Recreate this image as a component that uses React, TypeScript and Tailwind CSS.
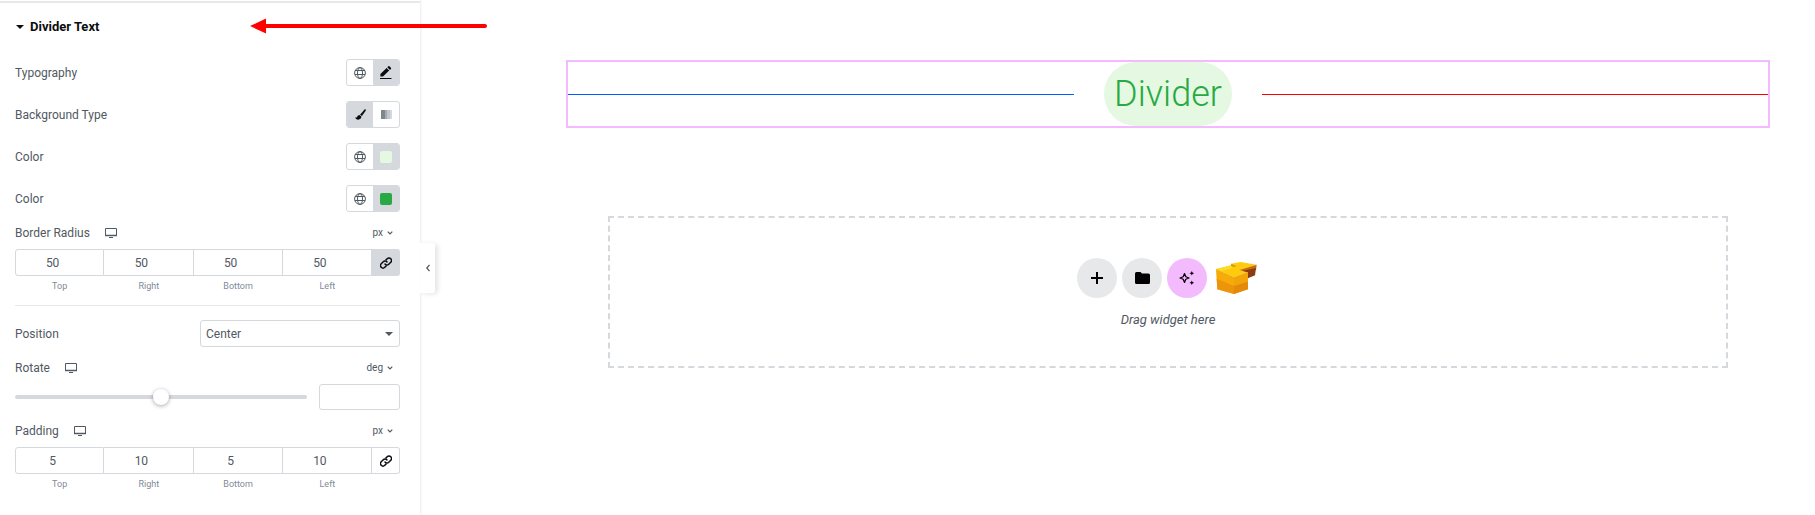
import { useState, type ReactNode } from "react"

const SIDES = ["Top", "Right", "Bottom", "Left"]

function GlobeIcon() {
  return (
    <svg viewBox="0 0 12 12" className="size-3" fill="none" stroke="currentColor">
      <circle cx="6" cy="6" r="5.4" />
      <ellipse cx="6" cy="6" rx="2.5" ry="5.4" />
      <path d="M1 3.500h10M1 7.500h10" />
    </svg>
  )
}

function PencilIcon() {
  return (
    <svg viewBox="0 0 12 14" className="h-3.5 w-3" fill="currentColor">
      <path d="M.4 10.500V8L6.600 1.900 9.200 4.500 3 10.500zM7.300 1.300l.9-.9c.4-.4 1-.4 1.400 0l1.300 1.300c.4.4.4 1 0 1.400l-.9.9zM0 12h11.500v1H0z" />
    </svg>
  )
}

function BrushIcon() {
  return (
    <svg viewBox="0 0 12 12" className="size-[11px]" fill="currentColor">
      <path d="M11.6.5c.4.400.300.900 0 1.300L7.600 7.700 5.500 6.200 10.200.7c.4-.4 1-.6 1.400-.2zM4.800 6.600l2.200 1.700c0 2.200-1.500 3.300-3.500 3.300C1.700 11.600.6 10.700.2 9.100c.6.4 1.300.4 1.800-.2.7-.9 1.500-2.300 2.800-2.300z" />
    </svg>
  )
}

function GradientIcon() {
  return (
    <svg viewBox="0 0 11 9" className="h-[9px] w-[11px]">
      <path fill="#7d868b" d="M0 0h4v9H0z" />
      <path fill="#a4a9b3" d="M4 0h2v9H4z" />
      <path fill="#c0c3d2" d="M6 0h3v9H6z" />
      <path fill="#d5d8dc" d="M9 0h2v9H9z" />
    </svg>
  )
}

function DesktopIcon() {
  return (
    <svg viewBox="0 0 12 10" className="h-2.5 w-3" fill="none" stroke="currentColor">
      <path d="M.5.5h11v7H.5z" />
      <path d="M0 7.500h12" strokeWidth="1.500" />
      <path d="M4 9.500h4" />
    </svg>
  )
}

function ChevronIcon() {
  return (
    <svg viewBox="0 0 6 4" className="h-1 w-1.5" fill="none" stroke="currentColor" strokeWidth="1.200">
      <path d="M.7.7 3 3 5.300.7" />
    </svg>
  )
}

function LinkIcon() {
  return (
    <svg viewBox="0 0 24 24" className="size-3" fill="none" stroke="currentColor" strokeWidth="3" strokeLinecap="round">
      <path d="M10 14a5 5 0 0 0 7.500.5l4-4a5 5 0 0 0-7.100-7.100L12 5.700" />
      <path d="M14 10a5 5 0 0 0-7.500-.5l-4 4a5 5 0 0 0 7.100 7.100L12 18.300" />
    </svg>
  )
}

function BlocksIcon() {
  return (
    <svg viewBox="0 0 123 96" className="h-8 w-[41px]">
      <path fill="#ffcb0d" d="M0 21 46 10l-1-5L74 0l48 8-50 16 24 6-42 15z" />
      <path fill="#fbdc2a" d="M0 21 46 10l16 4-46 13z" />
      <path fill="#e09a0a" d="m46 5 16 8-10 3-8-5z" />
      <path fill="#c96a10" d="m70 24 52-16-2 16-24 8z" />
      <path fill="#8a3d10" d="m80 26 40-8-3 22-21 9V31z" />
      <path fill="#f7ab08" d="m0 21 54 24v51L4 82z" />
      <path fill="#ec950a" d="m2 50 52 22v24L4 82z" />
      <path fill="#f2a50a" d="m54 45 42-15v52L54 96z" />
      <path fill="#e38a0c" d="m54 72 42-13v23L54 96z" />
    </svg>
  )
}

function Toggle({ active, label, children }: { active?: boolean; label: string; children: ReactNode }) {
  return (
    <button
      type="button"
      aria-label={label}
      aria-pressed={!!active}
      className={`flex flex-1 items-center justify-center ${active ? "bg-[#d5d8dc] text-[#0c0d0e]" : ""}`}
    >
      {children}
    </button>
  )
}

function ControlRow({ label, children }: { label: string; children: ReactNode }) {
  return (
    <div className="flex h-[27px] items-center justify-between">
      <span>{label}</span>
      <div role="group" aria-label={label} className="flex h-full w-[54px] overflow-hidden rounded-[3px] border border-[#d5d8dc]">
        {children}
      </div>
    </div>
  )
}

function UnitHeader({ label, unit }: { label: string; unit: string }) {
  return (
    <div className="flex h-4 items-center justify-between pr-[7px]">
      <div className="flex items-center gap-[15px]">
        <span>{label}</span>
        <button type="button" aria-label={`${label} on desktop`}>
          <DesktopIcon />
        </button>
      </div>
      <button type="button" className="flex items-center gap-1 text-[10px]">
        {unit}
        <ChevronIcon />
      </button>
    </div>
  )
}

function Dimensions({ label, initial, linked }: { label: string; initial: string[]; linked?: boolean }) {
  const [values, setValues] = useState(initial)

  return (
    <div>
      <UnitHeader label={label} unit="px" />
      <div className="mt-2 flex">
        {SIDES.map((side, i) => (
          <label key={side} className="flex min-w-0 flex-1 flex-col text-center text-[9px] text-[#818a96]">
            <input
              value={values[i]}
              onChange={(e) => setValues(values.map((v, j) => (j === i ? e.target.value : v)))}
              className={`h-[27px] w-full border-y border-r border-[#d5d8dc] pr-3.5 text-center text-xs text-[#515962] outline-none ${i === 0 ? "rounded-l-[3px] border-l" : ""}`}
            />
            <span className="mt-1 leading-3">{side}</span>
          </label>
        ))}
        <button
          type="button"
          aria-label={`Link ${label} values`}
          aria-pressed={!!linked}
          className={`flex h-[27px] w-7 items-center justify-center rounded-r-[3px] border border-l-0 border-[#d5d8dc] text-[#0c0d0e] ${linked ? "bg-[#d5d8dc]" : ""}`}
        >
          <LinkIcon />
        </button>
      </div>
    </div>
  )
}

function RotateControl() {
  const [angle, setAngle] = useState("")

  return (
    <div>
      <UnitHeader label="Rotate" unit="deg" />
      <div className="mt-2 flex items-center gap-3">
        <input
          type="range"
          aria-label="Rotate"
          min={-360}
          max={360}
          value={angle || 0}
          onChange={(e) => setAngle(e.target.value)}
          className="h-4 min-w-0 flex-1 appearance-none bg-transparent [&::-webkit-slider-runnable-track]:h-1 [&::-webkit-slider-runnable-track]:rounded-full [&::-webkit-slider-runnable-track]:bg-[#d5d8dc] [&::-webkit-slider-thumb]:-mt-1.5 [&::-webkit-slider-thumb]:size-4 [&::-webkit-slider-thumb]:appearance-none [&::-webkit-slider-thumb]:rounded-full [&::-webkit-slider-thumb]:bg-white [&::-webkit-slider-thumb]:shadow-[0_1px_4px_rgba(0,0,0,0.35)]"
        />
        <input
          aria-label="Rotate angle"
          value={angle}
          onChange={(e) => setAngle(e.target.value)}
          className="h-[26px] w-[81px] rounded-[3px] border border-[#d5d8dc] px-2 outline-none"
        />
      </div>
    </div>
  )
}

function StylePanel() {
  return (
    <aside className="relative w-[420px] shrink-0 pt-px pr-5 pb-6 pl-[15px] text-xs text-[#515962] shadow-[0_0_3px_rgba(0,0,0,0.15)]">
      <div className="-mr-5 -ml-[15px] h-0.5 bg-[#e6e8ea]" />
      <button type="button" className="mt-[15px] flex h-[18px] items-center gap-1.5 pl-px text-[13px] font-bold text-[#0c0d0e]">
        <svg viewBox="0 0 8 4" className="h-1 w-2" fill="currentColor">
          <path d="M0 0h8L4 4z" />
        </svg>
        Divider Text
      </button>

      <div className="mt-[23px] flex flex-col gap-[15px]">
        <ControlRow label="Typography">
          <Toggle label="Global typography"><GlobeIcon /></Toggle>
          <Toggle label="Edit typography" active><PencilIcon /></Toggle>
        </ControlRow>
        <ControlRow label="Background Type">
          <Toggle label="Classic" active><BrushIcon /></Toggle>
          <Toggle label="Gradient"><GradientIcon /></Toggle>
        </ControlRow>
        <ControlRow label="Color">
          <Toggle label="Global background color"><GlobeIcon /></Toggle>
          <Toggle label="Pick background color" active>
            <span className="size-3 rounded-xs bg-[#e5f8e2]" />
          </Toggle>
        </ControlRow>
        <ControlRow label="Color">
          <Toggle label="Global text color"><GlobeIcon /></Toggle>
          <Toggle label="Pick text color" active>
            <span className="size-3 rounded-xs bg-[#28a943]" />
          </Toggle>
        </ControlRow>
      </div>

      <div className="mt-[13px]">
        <Dimensions label="Border Radius" initial={["50", "50", "50", "50"]} linked />
      </div>

      <hr className="mt-[13px] border-[#e6e8ea]" />

      <div className="mt-3.5 flex items-center justify-between">
        <label htmlFor="position">Position</label>
        <div className="relative w-[200px]">
          <select
            id="position"
            defaultValue="Center"
            className="h-[27px] w-full appearance-none rounded-[3px] border border-[#d5d8dc] px-[5px] outline-none"
          >
            <option>Left</option>
            <option>Center</option>
            <option>Right</option>
          </select>
          <svg viewBox="0 0 8 4" className="pointer-events-none absolute top-3 right-[7px] h-1 w-2" fill="currentColor">
            <path d="M0 0h8L4 4z" />
          </svg>
        </div>
      </div>

      <div className="mt-[13px]">
        <RotateControl />
      </div>
      <div className="mt-[13px]">
        <Dimensions label="Padding" initial={["5", "10", "5", "10"]} />
      </div>

      <button
        type="button"
        aria-label="Hide panel"
        className="absolute top-[243px] left-full flex h-[50px] w-[15px] items-center justify-center rounded-r-[3px] bg-white text-[#515962] shadow-[3px_1px_5px_rgba(0,0,0,0.1)]"
      >
        <svg viewBox="0 0 4 8" className="h-2 w-1" fill="none" stroke="currentColor" strokeWidth="1.3">
          <path d="M3.500.8.8 4l2.700 3.200" />
        </svg>
      </button>
    </aside>
  )
}

function Canvas() {
  return (
    <main className="min-w-0 flex-1 pt-[60px] pr-[45px] pl-[146px]">
      <div className="flex items-center gap-[30px] border-2 border-[#f3bafd]">
        <div className="h-px flex-1 bg-[#005eff]" />
        <span className="rounded-[50px] bg-[#e5f8e2] px-2.5 py-[5px] text-[36px] leading-[54px] font-light text-[#28a943]">
          Divider
        </span>
        <div className="h-px flex-1 bg-[#ff0000]" />
      </div>

      <div className="mx-[42px] mt-[88px] flex h-[152px] flex-col items-center border-2 border-dashed border-[#d5d8dc] pt-10">
        <div className="flex items-center gap-[5px] text-black">
          <button type="button" aria-label="Add container" className="flex size-10 items-center justify-center rounded-full bg-[#e6e8ea]">
            <svg viewBox="0 0 12 12" className="size-3" stroke="currentColor" strokeWidth="2">
              <path d="M6 0v12M0 6h12" />
            </svg>
          </button>
          <button type="button" aria-label="Add template" className="flex size-10 items-center justify-center rounded-full bg-[#e6e8ea]">
            <svg viewBox="0 0 15 12" className="h-3 w-[15px]" fill="currentColor">
              <path d="M1.500 0H5.500L7 1.500h6.500A1.500 1.500 0 0 1 15 3v7.500a1.500 1.500 0 0 1-1.500 1.500h-12A1.500 1.500 0 0 1 0 10.500v-9A1.500 1.500 0 0 1 1.500 0z" />
            </svg>
          </button>
          <button type="button" aria-label="Build with AI" className="flex size-10 items-center justify-center rounded-full bg-[#f3bafd]">
            <svg viewBox="0 0 16 14" className="h-3.5 w-4">
              <path fill="none" stroke="currentColor" strokeWidth="1.200" strokeLinejoin="round" d="M5.500 2.500 6.800 5.700 10 7 6.800 8.300 5.500 11.500 4.200 8.300 1 7l3.200-1.300z" />
              <path fill="currentColor" d="m12.800 0 .7 1.600 1.600.7-1.600.7-.7 1.600-.7-1.600-1.600-.7 1.600-.7zM12.800 9.400l.7 1.600 1.600.7-1.600.7-.7 1.600-.7-1.600-1.600-.7 1.600-.7z" />
            </svg>
          </button>
          <button type="button" aria-label="Add blocks" className="flex h-10 w-[47px] items-center justify-end pr-0.5">
            <BlocksIcon />
          </button>
        </div>
        <p className="mt-3.5 text-[13px] leading-4 text-[#515962] italic">Drag widget here</p>
      </div>
    </main>
  )
}

export default function App() {
  return (
    <div className="relative flex min-h-screen bg-white font-[Roboto,sans-serif]">
      <StylePanel />
      <Canvas />
      <svg viewBox="0 0 237 16" className="pointer-events-none absolute top-[18px] left-[250px] h-4 w-[237px]" fill="#ff0000">
        <path d="m0 8 16-7.500v15z" />
        <path d="M15 6h220a2 2 0 0 1 0 4H15z" />
      </svg>
    </div>
  )
}
